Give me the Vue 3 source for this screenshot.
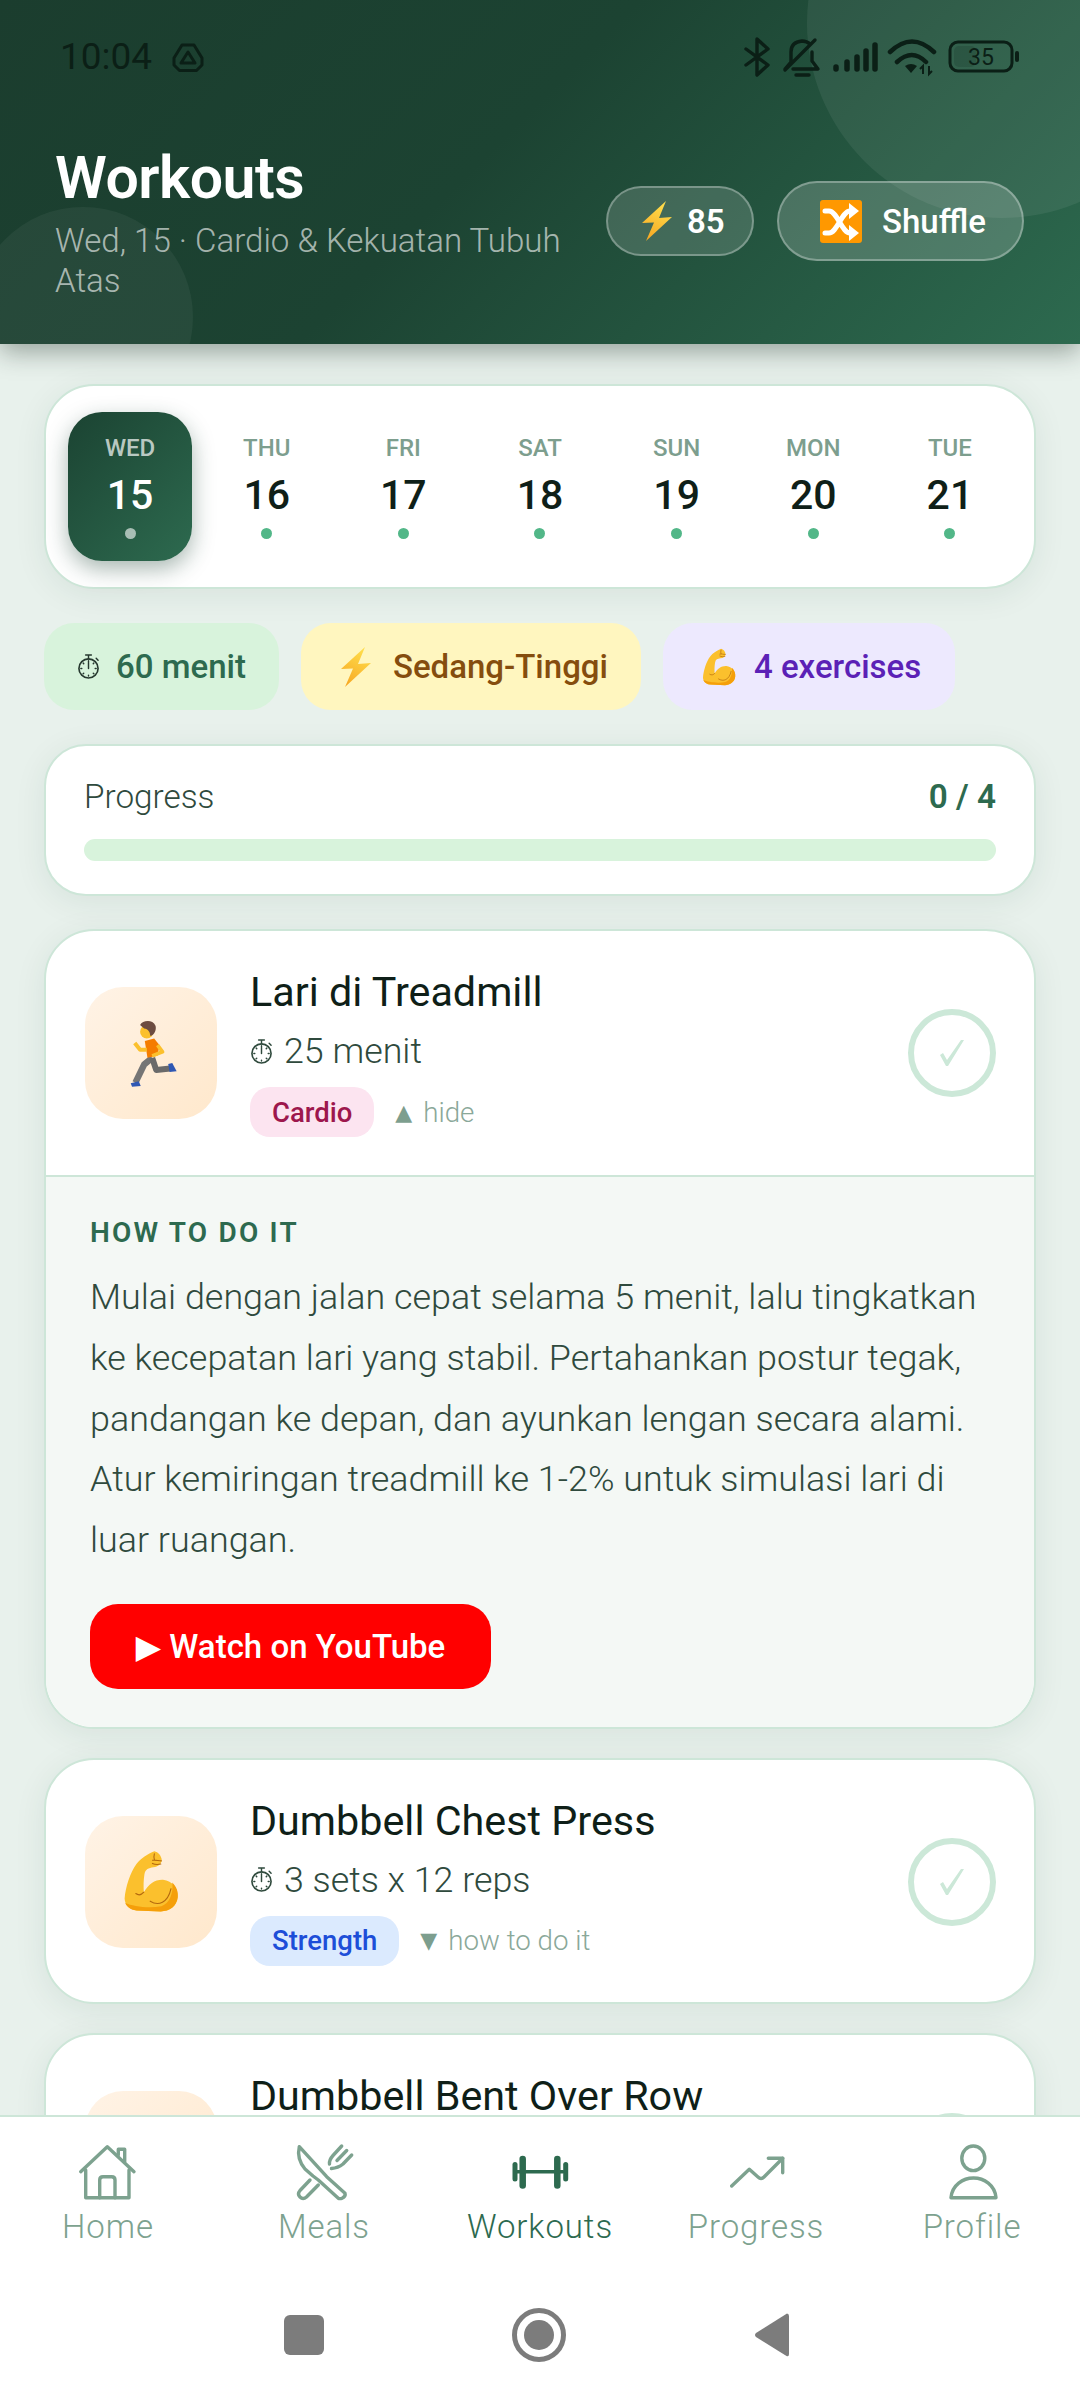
<script setup>
const days = [
  { name: 'WED', num: 15, active: true },
  { name: 'THU', num: 16 },
  { name: 'FRI', num: 17 },
  { name: 'SAT', num: 18 },
  { name: 'SUN', num: 19 },
  { name: 'MON', num: 20 },
  { name: 'TUE', num: 21 }
]
const exercises = [
  { id: 1, title: 'Lari di Treadmill', sub: '25 menit', icon: 'runner', tag: 'Cardio', tagClass: 'tag-cardio', arrow: '▲', toggle: 'hide', open: true },
  { id: 2, title: 'Dumbbell Chest Press', sub: '3 sets x 12 reps', icon: 'muscle', tag: 'Strength', tagClass: 'tag-strength', arrow: '▼', toggle: 'how to do it' },
  { id: 3, title: 'Dumbbell Bent Over Row', icon: 'muscle' }
]
const navItems = ['Home', 'Meals', 'Workouts', 'Progress', 'Profile']
</script>

<template>
  <div class="app">
    <svg class="sprite" width="0" height="0" aria-hidden="true">
      <defs>
        <linearGradient id="boltGrad" x1="0.7" y1="0" x2="0.3" y2="1">
          <stop offset="0" stop-color="#ffdf4d" />
          <stop offset="1" stop-color="#f7a823" />
        </linearGradient>
        <symbol id="bolt" viewBox="0 0 32 40">
          <path d="M25 0 L1 22 L13 21.5 L5 40 L31 16 L18 17 Z" fill="url(#boltGrad)" />
        </symbol>
        <symbol id="muscle" viewBox="30 25 175 195">
          <path d="M128 28 C140 30 150 42 151 55 C150 68 140 76 125 78 C110 80 100 84 97 100 C94 118 94 138 95 156 C110 130 130 116 155 117 C185 120 203 145 201 172 C198 200 175 216 148 216 L72 213 C50 211 36 196 35 176 C38 140 52 95 72 68 C85 50 108 36 128 28 Z" fill="#fbc02d" />
          <path d="M184 126 C198 140 203 156 201 172 C198 200 175 216 148 216 L72 213 C55 212 42 203 37 190 C60 200 110 208 150 200 C175 192 188 160 184 126 Z" fill="#f59f0a" />
          <path d="M115 184 C140 200 170 190 180 145 M95 156 C88 164 78 166 70 160 M122 56 C132 54 140 58 150 58 M122 66 C130 70 140 70 148 68 M128 36 C126 44 126 50 128 54" fill="none" stroke="#b4690e" stroke-width="3.5" stroke-linecap="round" />
        </symbol>
        <symbol id="runner" viewBox="58 25 140 200">
          <path d="M124 138 L100 158 L74 212" fill="none" stroke="#757575" stroke-width="19" stroke-linejoin="round" />
          <path d="M124 138 L136 174 L178 170" fill="none" stroke="#6a6a6a" stroke-width="18" stroke-linejoin="round" />
          <path d="M60 214 L84 208 L90 222 L64 224 Z" fill="#2f57b3" />
          <path d="M172 156 L184 153 L197 178 L176 180 Z" fill="#2f57b3" />
          <path d="M102 88 L130 80 L146 100 L140 132 L110 138 Z" fill="#f57c00" />
          <path d="M140 100 L155 120 L124 132" fill="none" stroke="#fbc02d" stroke-width="11" stroke-linejoin="round" />
          <path d="M108 114 L88 114 L72 94" fill="none" stroke="#fbc02d" stroke-width="12" stroke-linejoin="round" />
          <circle cx="108" cy="60" r="20" fill="#fbc02d" />
          <path d="M88 40 C95 26 125 22 134 42 C138 56 128 72 118 72 C118 60 112 52 100 50 C96 46 92 44 88 40 Z" fill="#6d4c41" />
        </symbol>
        <symbol id="shuffle" viewBox="0 0 42 43">
          <rect width="42" height="43" rx="3" fill="#ff9800" />
          <path d="M5 11 H9 C17 11 22 33 30 33 H32 M5 33 H9 C17 33 22 11 30 11 H32" fill="none" stroke="#fff" stroke-width="5" stroke-linecap="round" />
          <path d="M29 3 L39 11 L29 19 Z M29 25 L39 33 L29 41 Z" fill="#fff" />
        </symbol>
        <symbol id="watch" viewBox="0 0 24 26">
          <circle cx="12" cy="15" r="10" fill="none" stroke="currentColor" stroke-width="1.7" />
          <path d="M9 1 H15 M12 1 V5 M20 4.5 L22 6.5 M12 15 V8.5 M12 7 V8 M12 22 V23 M5 15 H4 M20 15 H19 M7 10 L6.4 9.4 M17 10 L17.6 9.4 M7 20 L6.4 20.6 M17 20 L17.6 20.6" fill="none" stroke="currentColor" stroke-width="1.5" stroke-linecap="round" />
        </symbol>
      </defs>
    </svg>

    <header class="header">
      <span class="blob blob-top"></span>
      <span class="blob blob-bottom"></span>
      <div class="status">
        <div class="status-left">
          <span class="clock">10:04</span>
          <svg class="status-vpn" viewBox="0 0 32 29" width="32" height="29">
            <path d="M10 2 H22 L30 15 V22 L24.5 27.5 H7.5 L2 22 V15 Z" fill="none" stroke="#0b1f16" stroke-width="3" stroke-linejoin="round" />
            <path d="M16 9 L23 20 H9 Z" fill="none" stroke="#0b1f16" stroke-width="3" stroke-linejoin="round" />
          </svg>
        </div>
        <svg class="status-right" viewBox="0 0 276 40" width="276" height="40">
          <g fill="none" stroke="#0b1f16" stroke-width="3.4" stroke-linecap="round" stroke-linejoin="round">
            <path d="M2 12 L24 28 L13 38 V2 L24 12 L2 28" />
            <path d="M41 32 L47 25 V15 Q47 5 58 4 Q63 4 66 7 M68 15 V24 L74 32 H49 M52 38 H65 M41 33 L71 3" />
            <path d="M146 15 Q168 -6 190 15 M153 25 Q168 11 182 25" stroke-width="4.5" />
            <rect x="206" y="5" width="62" height="29" rx="8" stroke-width="3" />
            <path d="M273 16 V23" stroke-width="4" />
          </g>
          <g stroke="#0b1f16" stroke-width="5.5" stroke-linecap="round">
            <path d="M92 32 V30 M103 32 V25 M113 32 V20 M122 32 V14 M131 32 V8" />
          </g>
          <path d="M161 29 Q167 25 173 29 L167 36 Z" fill="#0b1f16" />
          <path d="M179 37 V29 L176 32 M185 29 V37 L188 34" fill="none" stroke="#0b1f16" stroke-width="2" />
          <rect x="210" y="9" width="22" height="21" rx="5" fill="#0b1f16" opacity="0.16" />
          <text x="237" y="28" text-anchor="middle" class="battery-text">35</text>
        </svg>
      </div>
      <div class="hero">
        <div class="hero-text">
          <h1>Workouts</h1>
          <p>Wed, 15 · Cardio &amp; Kekuatan Tubuh Atas</p>
        </div>
        <div class="score pill">
          <svg width="32" height="40"><use href="#bolt" /></svg>
          <span>85</span>
        </div>
        <button class="shuffle pill">
          <svg width="42" height="43"><use href="#shuffle" /></svg>
          <span>Shuffle</span>
        </button>
      </div>
    </header>

    <main class="content">
      <section class="card calendar">
        <div v-for="d in days" :key="d.num" class="day" :class="{ active: d.active }">
          <span class="day-name">{{ d.name }}</span>
          <span class="day-num">{{ d.num }}</span>
          <span class="day-dot"></span>
        </div>
      </section>

      <section class="chips">
        <div class="chip chip-green">
          <svg class="chip-watch" width="23" height="25"><use href="#watch" /></svg>
          <span>60 menit</span>
        </div>
        <div class="chip chip-yellow">
          <svg class="chip-emoji" width="32" height="40"><use href="#bolt" /></svg>
          <span>Sedang-Tinggi</span>
        </div>
        <div class="chip chip-purple">
          <svg class="chip-emoji" width="34" height="40"><use href="#muscle" /></svg>
          <span>4 exercises</span>
        </div>
      </section>

      <section class="card progress">
        <div class="progress-head">
          <span>Progress</span>
          <strong>0 / 4</strong>
        </div>
        <div class="progress-track"></div>
      </section>

      <section class="list">
        <article v-for="ex in exercises" :key="ex.id" class="card exercise">
          <div class="ex-row">
            <div class="ex-icon">
              <svg v-if="ex.icon === 'runner'" class="runner-svg" width="47" height="67"><use href="#runner" /></svg>
              <svg v-else width="56" height="63"><use href="#muscle" /></svg>
            </div>
            <div class="ex-main">
              <h2>{{ ex.title }}</h2>
              <div v-if="ex.sub" class="ex-sub">
                <svg width="23" height="25"><use href="#watch" /></svg>
                <span>{{ ex.sub }}</span>
              </div>
              <div v-if="ex.tag" class="ex-meta">
                <span class="tag" :class="ex.tagClass">{{ ex.tag }}</span>
                <span class="toggle"><span class="arrow">{{ ex.arrow }}</span>{{ ex.toggle }}</span>
              </div>
            </div>
            <div class="ex-check">
              <svg viewBox="0 0 24 26" width="24" height="26">
                <path d="M0 15 L3 13 L7 20 L21 0 H24 L8 26 H6 Z" fill="#cce8d8" />
              </svg>
            </div>
          </div>
          <div v-if="ex.open" class="ex-detail">
            <h3>HOW TO DO IT</h3>
            <p>Mulai dengan jalan cepat selama 5 menit, lalu tingkatkan ke kecepatan lari yang stabil. Pertahankan postur tegak, pandangan ke depan, dan ayunkan lengan secara alami. Atur kemiringan treadmill ke 1-2% untuk simulasi lari di luar ruangan.</p>
            <a class="yt">▶ Watch on YouTube</a>
          </div>
        </article>
      </section>
    </main>

    <footer class="bottom">
      <nav class="tabs">
        <div v-for="item in navItems" :key="item" class="tab" :class="{ current: item === 'Workouts' }">
          <svg viewBox="0 0 66 66" width="66" height="66" fill="none" stroke="currentColor" stroke-width="3.4" stroke-linecap="round" stroke-linejoin="round">
            <template v-if="item === 'Home'">
              <path d="M5.700 32.700 L32.300 7.700 L59 32.700" />
              <path d="M10.700 31 V58.700 H54 V31" />
              <path d="M24.700 58.700 V41 Q24.700 37.700 28 37.700 H36.700 Q40 37.700 40 41 V58.700" />
              <path d="M43.300 16 V10.300 H49.700 V22.700" />
            </template>
            <template v-else-if="item === 'Meals'">
              <path d="M8.300 7.700 L35.700 37.700 L54 54.300 Q55 57.500 51 59.300 Q48.500 60 47.300 59.300 L27.300 41 L22 37 L14 30 Q5.500 20 8.300 7.700 Z" />
              <path d="M19 41 L9 51.500 Q6 55 9 58 Q12 61 15.500 58 L27.300 46" />
              <path d="M50.700 7 L42 16.500 Q38 21 38.500 25 M60.700 16 L52 25 Q47 29 40.500 29.500 M55.700 11.500 L46 21.500" />
            </template>
            <template v-else-if="item === 'Workouts'">
              <path d="M8 25.500 V40" stroke-width="5" />
              <path d="M58.700 25.500 V40" stroke-width="5" />
              <path d="M15.700 20 V46.500" stroke-width="6.500" />
              <path d="M50.300 20 V46.500" stroke-width="6.500" />
              <path d="M10 32.700 H56" stroke-width="3.500" />
            </template>
            <template v-else-if="item === 'Progress'">
              <path d="M8.700 47 L26.300 30.300 L35 38 Q38 41 41 38 L59.700 19.300" />
              <path d="M45.300 19.300 H59.700 V33.700" />
            </template>
            <template v-else>
              <ellipse cx="34.300" cy="19.300" rx="11.500" ry="12.300" />
              <path d="M12 58.700 C13 46 24 39 34.500 39 C45 39 56 46 57 58.700 Z" />
            </template>
          </svg>
          <span>{{ item }}</span>
        </div>
      </nav>
      <div class="system">
        <span class="sys-square"></span>
        <svg viewBox="0 0 54 54" width="54" height="54">
          <circle cx="27" cy="27" r="24.500" fill="none" stroke="#7c7c7c" stroke-width="5" />
          <circle cx="27" cy="27" r="15" fill="#7c7c7c" />
        </svg>
        <svg viewBox="0 0 36 46" width="36" height="46">
          <path d="M33 1.500 Q35 1.500 35 4 V42 Q35 45 32.500 44 L2 25 Q0 23 2 21 Z" fill="#7c7c7c" />
        </svg>
      </div>
    </footer>
  </div>
</template>

<style>
html, body { margin: 0; padding: 0; background: #e8f0eb; }
</style>

<style scoped>
* { box-sizing: border-box; }
.app {
  width: 1080px;
  height: 2400px;
  display: flex;
  flex-direction: column;
  overflow: hidden;
  background: #e8f1ec;
  font-family: Roboto, "DejaVu Sans", sans-serif;
  color: #0f1f18;
}
.sprite { position: absolute; }

/* header */
.header {
  position: relative;
  z-index: 2;
  flex: 0 0 344px;
  overflow: hidden;
  background: linear-gradient(135deg, #1b3d2e 0%, #1c4332 45%, #2d6a4f 100%);
  box-shadow: 0 8px 24px rgba(20, 40, 30, 0.38);
}
.blob { position: absolute; border-radius: 50%; background: rgba(255, 255, 255, 0.065); }
.blob-top { left: 807px; top: -172px; width: 390px; height: 390px; }
.blob-bottom { left: -27px; top: 207px; width: 220px; height: 220px; background: rgba(255, 255, 255, 0.05); }
.status {
  position: relative;
  height: 100px;
  padding: 37px 60px 0 60px;
  display: flex;
  justify-content: space-between;
  align-items: flex-start;
}
.status-left { display: flex; align-items: center; gap: 20px; height: 40px; }
.clock { font-size: 37px; line-height: 40px; color: #0b1f16; }
.hero {
  position: relative;
  display: flex;
  align-items: center;
  padding: 47px 56px 0 55px;
}
.hero-text { width: 551px; flex: 0 0 551px; }
.hero-text h1 { margin: 0; font-size: 59px; line-height: 62px; font-weight: 650; color: #fff; letter-spacing: -0.5px; }
.hero-text p { margin: 12px 0 0; font-size: 33.100px; line-height: 40px; font-weight: 350; color: rgba(255, 255, 255, 0.62); }
.pill {
  display: flex;
  align-items: center;
  border-radius: 999px;
  border: 2px solid rgba(255, 255, 255, 0.3);
  background: rgba(255, 255, 255, 0.15);
  color: #fff;
  font-family: inherit;
}
.score { width: 148px; height: 70px; padding-left: 33px; gap: 14px; font-size: 33px; font-weight: 600; margin-top: -6px; }
.shuffle { width: 247px; height: 80px; margin-left: 23px; padding: 0 0 0 41px; gap: 20px; font-size: 33px; font-weight: 480; margin-top: -6px; background: rgba(255, 255, 255, 0.18); }
.battery-text { font-family: Roboto, sans-serif; font-size: 23px; fill: #0b1f16; }

/* content */
.content { flex: 1; min-height: 0; overflow: hidden; padding: 40px 44px 0; }
.card {
  background: #fff;
  border: 2px solid #cde6d8;
  box-shadow: 0 6px 32px rgba(27, 67, 50, 0.08);
}
.calendar {
  height: 205px;
  border-radius: 50px;
  padding: 26px 22px;
  display: grid;
  grid-template-columns: repeat(7, 1fr);
  column-gap: 12.5px;
}
.day {
  height: 149px;
  border-radius: 34px;
  padding-top: 21px;
  display: flex;
  flex-direction: column;
  align-items: center;
}
.day-name { font-size: 24px; line-height: 30px; font-weight: 500; color: #7d9e8e; }
.day-num { margin-top: 7px; font-size: 41px; line-height: 50px; font-weight: 470; color: #0f1f18; }
.day-dot { margin-top: 8px; width: 11px; height: 11px; border-radius: 50%; background: #52b788; }
.day.active {
  background: linear-gradient(135deg, #1b4332, #2d6a4f);
  box-shadow: 0 8px 22px rgba(27, 67, 50, 0.38);
}
.active .day-name { color: rgba(255, 255, 255, 0.7); }
.active .day-num { color: #fff; }
.active .day-dot { background: rgba(255, 255, 255, 0.6); }

.chips { display: flex; gap: 22px; margin-top: 34px; }
.chip {
  height: 87px;
  border-radius: 30px;
  padding: 0 34px;
  display: flex;
  align-items: center;
  font-size: 33px;
  font-weight: 480;
}
.chip-green { background: #d8f3dc; color: #2d6a4f; padding: 0 33px; }
.chip-watch { margin-right: 16px; color: #26382f; }
.chip-emoji { margin: 0 21px 0 5px; }
.chip-yellow { background: #fff6bf; color: #854d0e; padding-right: 33px; }
.chip-purple { background: #ede9fe; color: #5b21b6; }
.chip-purple .chip-emoji { margin-right: 18px; }

.progress { height: 152px; margin-top: 34px; border-radius: 42px; padding: 31px 38px 0; }
.progress-head { display: flex; justify-content: space-between; font-size: 33.300px; line-height: 40px; font-weight: 350; color: #2f4a3d; }
.progress-head strong { font-weight: 600; color: #2d6a4f; }
.progress-track { height: 22px; margin-top: 22px; border-radius: 11px; background: #d8f3dc; }

.list { display: flex; flex-direction: column; gap: 29px; margin-top: 33px; }
.exercise { border-radius: 50px; overflow: hidden; }
.ex-row { display: flex; align-items: center; min-height: 242px; padding: 36px 38px 36px 39px; }
.ex-icon {
  flex: 0 0 132px;
  height: 132px;
  margin-top: 2px;
  border-radius: 38px;
  background: linear-gradient(135deg, #fff3e6, #ffe8cc);
  display: flex;
  align-items: center;
  justify-content: center;
}
.runner-svg { margin-left: 4px; }
.ex-main { flex: 1; min-width: 0; margin-left: 33px; align-self: flex-start; }
.ex-main h2 { margin: 0; font-size: 41.300px; line-height: 50px; font-weight: 450; color: #0f1f18; }
.ex-sub { display: flex; align-items: center; gap: 11px; margin-top: 12px; height: 44px; font-size: 35.800px; font-weight: 350; color: #2f4a3d; }
.ex-meta { display: flex; align-items: center; gap: 21px; margin-top: 14px; }
.tag { height: 50px; border-radius: 20px; padding: 0 22px; display: flex; align-items: center; font-size: 27.5px; font-weight: 500; }
.tag-cardio { background: #fce4f0; color: #9d174d; }
.tag-strength { background: #dbeafe; color: #1d4ed8; }
.toggle { font-size: 27.700px; font-weight: 350; color: #8aa899; display: flex; align-items: center; }
.arrow { font-size: 22px; font-weight: 400; margin-right: 11px; color: #7d9e8e; }
.ex-check {
  flex: 0 0 88px;
  height: 88px;
  margin-top: 2px;
  border-radius: 50%;
  border: 6px solid #cce8d8;
  display: flex;
  align-items: center;
  justify-content: center;
}
.ex-detail { margin-top: 2px; border-top: 2px solid #cde6d8; background: #f4f8f5; padding: 38px 44px; }
.ex-detail h3 { margin: 0; font-size: 28px; line-height: 36px; font-weight: 600; letter-spacing: 2.2px; color: #2d6a4f; }
.ex-detail p { margin: 16px 0 0; font-size: 35.900px; line-height: 60.800px; font-weight: 300; color: #2f4a3d; }
.yt {
  display: inline-flex;
  align-items: center;
  justify-content: center;
  width: 401px;
  height: 85px;
  margin-top: 33px;
  border-radius: 28px;
  background: #ff0000;
  color: #fff;
  font-size: 33px;
  font-weight: 500;
}

/* bottom nav */
.bottom { position: relative; z-index: 2; flex: 0 0 285px; background: #fff; border-top: 2px solid #cde6d8; }
.tabs { display: grid; grid-template-columns: repeat(5, 216px); padding-top: 22px; }
.tab { display: flex; flex-direction: column; align-items: center; color: #7da28f; }
.tab span { margin-top: 2px; font-size: 33px; line-height: 40px; font-weight: 300; letter-spacing: 0.9px; }
.tab.current { color: #2d6a4f; }
.system { height: 153px; padding: 23px 0 0 284px; display: flex; align-items: center; gap: 188px; }
.sys-square { width: 40px; height: 40px; border-radius: 6px; background: #7c7c7c; }
</style>
